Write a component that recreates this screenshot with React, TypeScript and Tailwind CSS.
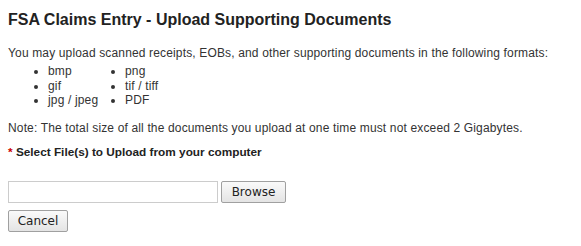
export default function App() {
  const colA = ["bmp", "gif", "jpg / jpeg"];
  const colB = ["png", "tif / tiff", "PDF"];
  return (
    <div className="min-h-screen bg-white px-2 text-[12px] leading-[14px] text-[#333]" style={{ fontFamily: '"Liberation Sans", Arial, sans-serif' }}>
      <h1 className="pt-[11px] text-[16px] font-bold leading-[18px] text-[#222]">
        FSA Claims Entry - Upload Supporting Documents
      </h1>
      <p className="mt-[17px] tracking-[0.15px]">
        You may upload scanned receipts, EOBs, and other supporting documents in the following formats:
      </p>
      <div className="mt-[4px] flex pl-[40px] tracking-[0.15px]">
        <ul className="w-[77px] list-disc">
          {colA.map((t) => (
            <li key={t} className="leading-[14.5px]">{t}</li>
          ))}
        </ul>
        <ul className="list-disc">
          {colB.map((t) => (
            <li key={t} className="leading-[14.5px]">{t}</li>
          ))}
        </ul>
      </div>
      <p className="mt-[13px] tracking-[0.15px]">
        Note: The total size of all the documents you upload at one time must not exceed 2 Gigabytes.
      </p>
      <div className="mt-[10px] text-[11.8px] font-bold text-[#222]">
        <span className="text-[#c00]">* </span>Select File(s) to Upload from your computer
      </div>
      <div className="mt-[22px] flex items-center gap-[3px]">
        <div className="h-[22px] w-[210px] border border-[#ccc] bg-white" />
        <button className="h-[22px] w-[65px] rounded-[2px] border border-[#a0a0a0] bg-gradient-to-b from-[#fafafa] to-[#e4e4e4] text-[12px] text-[#222]" style={{ fontFamily: '"DejaVu Sans", sans-serif' }}>
          Browse
        </button>
      </div>
      <div className="mt-[7px]">
        <button className="h-[22px] w-[60px] rounded-[2px] border border-[#a0a0a0] bg-gradient-to-b from-[#fafafa] to-[#e4e4e4] text-[12px] text-[#222]" style={{ fontFamily: '"DejaVu Sans", sans-serif' }}>
          Cancel
        </button>
      </div>
    </div>
  );
}
